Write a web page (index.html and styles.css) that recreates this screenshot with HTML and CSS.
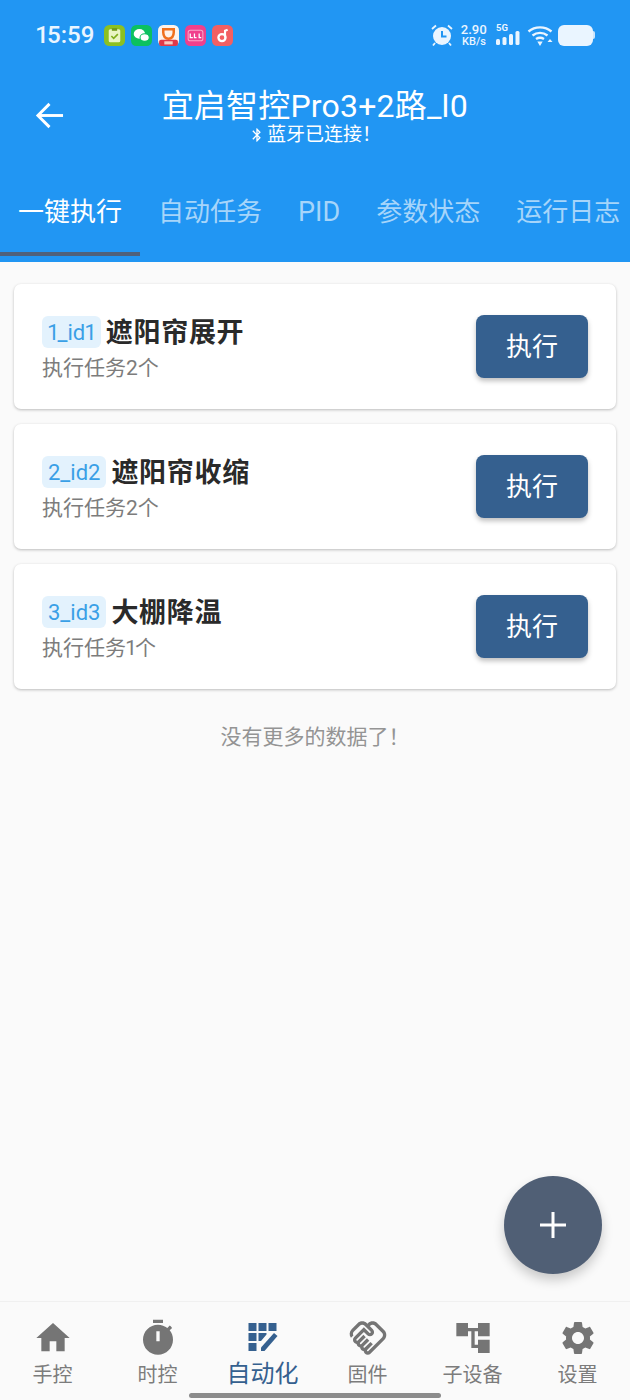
FILE: index.html
```html
<!DOCTYPE html>
<html lang="zh-CN">
<head>
  <meta charset="UTF-8" />
  <meta name="viewport" content="width=device-width, initial-scale=1.0"/>
  <title>宜启智控Pro3+2路_l0</title>
  <link rel="stylesheet" href="styles.css">
</head>
<body>

<header class="top">
  <div class="status-bar">
    <span class="time">15:59</span>
    <div class="notif-icons">
      <svg class="app-icon" viewBox="0 0 20 20"><rect width="20" height="20" rx="5" fill="#8cc021"/><rect x="4.500" y="4" width="11" height="12.500" rx="1.500" fill="#e9f5c4"/><rect x="7.500" y="3" width="5" height="2.500" fill="#6f9a18"/><path d="M7 10.500l2.200 2.200 4-4" fill="none" stroke="#7fae1c" stroke-width="1.500"/></svg>
      <svg class="app-icon" viewBox="0 0 20 20"><rect width="20" height="20" rx="5" fill="#0cc160"/><ellipse cx="8" cy="8.500" rx="5.400" ry="4.600" fill="#fff"/><ellipse cx="13" cy="12" rx="4.400" ry="3.600" fill="#fff" stroke="#0cc160"/></svg>
      <svg class="app-icon" viewBox="0 0 20 20"><rect width="20" height="20" rx="5" fill="#fdf3ea"/><path d="M5 4h10v3c0 4-2 6-5 6s-5-2-5-6z" fill="none" stroke="#f0701c" stroke-width="2.400"/><rect x="1" y="14" width="18" height="6" rx="2" fill="#e0384a"/><rect x="6" y="15.500" width="8" height="3" fill="#f7c9c0"/></svg>
      <svg class="app-icon" viewBox="0 0 20 20"><rect width="20" height="20" rx="5" fill="#f0408c"/><rect x="3" y="5" width="14" height="10" rx="2" fill="none" stroke="#f9a6c9"/><path d="M5 8v4h2.500M9 8v4h2M13.500 8v4h2" fill="none" stroke="#fff" stroke-width="1.200"/></svg>
      <svg class="app-icon" viewBox="0 0 20 20"><rect width="20" height="20" rx="5" fill="#f25f62"/><circle cx="9.500" cy="12" r="3.400" fill="none" stroke="#fff" stroke-width="2.200"/><path d="M12.400 12V5.500l2.500-1" fill="none" stroke="#fff" stroke-width="2"/></svg>
    </div>
    <div class="sys-icons">
      <svg class="alarm" viewBox="0 0 24 24"><circle cx="12" cy="13" r="9" fill="#eaf5ff"/><path d="M12 8v5.500h4.500" fill="none" stroke="#2196f3" stroke-width="2"/><path d="M2 6l4-3.500M22 6l-4-3.500M5 20l-2 2.500M19 20l2 2.500" stroke="#eaf5ff" stroke-width="1.800"/></svg>
      <div class="speed"><span>2.90</span><span class="unit">KB/s</span></div>
      <div class="signal">
        <span class="five-g">5G</span>
        <svg class="bars" viewBox="0 0 24 14"><rect x="0" y="8" width="4" height="6" rx="1.500"/><rect x="6.500" y="6" width="4" height="8" rx="1.500"/><rect x="13" y="3" width="4" height="11" rx="1.500"/><rect x="19.500" y="0" width="4" height="14" rx="1.500"/></svg>
      </div>
      <svg class="wifi" viewBox="0 0 26 22" fill="none" stroke="#eaf5ff" stroke-width="2.400"><path d="M1.500 7.500c6.500-5.500 16.500-5.500 23 0"/><path d="M5.500 11.500c4.500-3.500 10.500-3.500 15 0"/><path d="M9 15c2.500-1.600 5.500-1.600 8 0"/><path d="M10.300 17.500h5.400L13 22z" fill="#eaf5ff" stroke="none"/><path d="M20.500 18h5l-2.500-3z" fill="#eaf5ff" stroke="none"/></svg>
      <div class="battery"><span class="battery-body"></span><span class="battery-tip"></span></div>
    </div>
  </div>

  <div class="app-bar">
    <svg class="back" viewBox="0 0 30 30" fill="none" stroke="#fff" stroke-width="3"><path d="M29 15H3"/><path d="M15 3L3 15l12 12"/></svg>
    <div class="titles">
      <h1>宜启智控Pro3+2路_l0</h1>
      <p class="conn">
        <svg class="bt" viewBox="0 0 24 24"><path fill="#fff" d="M17.710 7.710 12 2h-1v7.590L6.410 5 5 6.410 10.590 12 5 17.590 6.410 19 11 14.410V22h1l5.710-5.710-4.300-4.290 4.300-4.290zM13 5.830l1.880 1.880L13 9.590V5.830zm1.880 10.460L13 18.170v-3.760l1.880 1.880z"/></svg>
        蓝牙已连接！
      </p>
    </div>
  </div>

  <nav class="tabs">
    <button class="tab active">一键执行</button>
    <button class="tab">自动任务</button>
    <button class="tab tab-latin">PID</button>
    <button class="tab">参数状态</button>
    <button class="tab">运行日志</button>
  </nav>
</header>

<main class="list">
  <div class="card">
    <div class="card-info">
      <div class="card-title"><span class="tag">1_id1</span><span class="name">遮阳帘展开</span></div>
      <div class="card-sub">执行任务2个</div>
    </div>
    <button class="run">执行</button>
  </div>
  <div class="card">
    <div class="card-info">
      <div class="card-title"><span class="tag">2_id2</span><span class="name">遮阳帘收缩</span></div>
      <div class="card-sub">执行任务2个</div>
    </div>
    <button class="run">执行</button>
  </div>
  <div class="card">
    <div class="card-info">
      <div class="card-title"><span class="tag">3_id3</span><span class="name">大棚降温</span></div>
      <div class="card-sub">执行任务1个</div>
    </div>
    <button class="run">执行</button>
  </div>
  <p class="no-more">没有更多的数据了！</p>
</main>

<button class="fab">
  <svg viewBox="0 0 26 26"><path d="M13 0v26M0 13h26" stroke="#fff" stroke-width="3"/></svg>
</button>

<footer class="bottom-nav">
  <div class="nav-item">
    <svg viewBox="0 0 24 24"><path d="M10 20v-6h4v6h5v-8h3L12 3 2 12h3v8z"/></svg>
    <span>手控</span>
  </div>
  <div class="nav-item">
    <svg viewBox="0 0 24 24"><path d="M9 1h6v2H9zm10.030 6.390 1.420-1.420c-.43-.51-.9-.99-1.410-1.410l-1.420 1.420C16.070 4.740 14.120 4 12 4c-4.970 0-9 4.030-9 9s4.020 9 9 9 9-4.030 9-9c0-2.120-.74-4.070-1.970-5.610zM13 14h-2V8h2v6z"/></svg>
    <span>时控</span>
  </div>
  <div class="nav-item active">
    <svg viewBox="0 0 40 40"><path d="M5.500 5h8v8h-8zM15.500 5h8v8h-8zM25.500 5h8v8h-8zM5.500 15h8v8h-8zM15.500 15h8v1.500l-5.500 6.500h-2.500zM5.500 25h8v8h-8z"/><path d="M18 33v-3.500L31 15l3.500 3L21.500 33z"/></svg>
    <span>自动化</span>
  </div>
  <div class="nav-item">
    <svg viewBox="0 0 24 24"><path d="M12.220 19.850c-.18.18-.5.21-.71 0-.18-.18-.21-.5 0-.71l3.390-3.390-1.410-1.410-3.390 3.390c-.19.2-.51.19-.71 0-.21-.21-.18-.53 0-.71l3.390-3.390-1.410-1.410-3.390 3.390c-.18.18-.5.21-.71 0-.19-.19-.19-.51 0-.71l3.390-3.390-1.420-1.410-3.390 3.390c-.18.18-.5.21-.71 0-.19-.2-.19-.51 0-.71L9.520 8.400l1.870 1.860c.95.95 2.590.94 3.540 0 .98-.98.98-2.560 0-3.540l-1.860-1.860.28-.28c.78-.78 2.050-.78 2.830 0l4.240 4.240c.78.78.78 2.050 0 2.830l-8.200 8.200zm9.610-6.780c1.560-1.560 1.560-4.090 0-5.660l-4.240-4.240c-1.560-1.560-4.090-1.560-5.660 0l-.28.28-.28-.28c-1.560-1.560-4.090-1.560-5.660 0L2.170 6.710c-1.420 1.420-1.550 3.630-.4 5.190l1.450-1.450c-.39-.75-.26-1.700.37-2.330l3.540-3.540c.78-.78 2.050-.78 2.830 0l3.560 3.560c.18.18.21.5 0 .71-.21.21-.53.18-.71 0L9.520 5.570l-5.800 5.790c-.98.97-.98 2.560 0 3.540.39.39.89.63 1.420.7.07.52.3 1.020.7 1.420.4.4.9.63 1.420.7.07.52.3 1.020.7 1.420.4.4.9.63 1.420.7.07.54.31 1.030.7 1.420.47.47 1.100.73 1.770.73.67 0 1.300-.26 1.770-.73l8.210-8.190z"/></svg>
    <span>固件</span>
  </div>
  <div class="nav-item">
    <svg viewBox="0 0 24 24"><path d="M22 11V3h-7v3H9V3H2v8h7V8h2v10h4v3h7v-8h-7v3h-2V8h2v3z"/></svg>
    <span>子设备</span>
  </div>
  <div class="nav-item">
    <svg viewBox="0 0 24 24"><path d="M19.140 12.940c.04-.3.06-.61.06-.94 0-.32-.02-.64-.07-.94l2.030-1.580c.18-.14.23-.41.12-.61l-1.920-3.320c-.12-.22-.37-.29-.59-.22l-2.390.96c-.5-.38-1.030-.7-1.620-.94l-.36-2.540c-.04-.24-.24-.41-.48-.41h-3.840c-.24 0-.43.17-.47.41l-.36 2.540c-.59.24-1.130.57-1.620.94l-2.390-.96c-.22-.08-.47 0-.59.22L2.740 8.870c-.12.21-.08.47.12.61l2.030 1.580c-.05.3-.09.63-.09.94s.02.64.07.94l-2.030 1.580c-.18.14-.23.41-.12.61l1.920 3.320c.12.22.37.29.59.22l2.390-.96c.5.38 1.030.7 1.620.94l.36 2.540c.05.24.24.41.48.41h3.840c.24 0 .44-.17.47-.41l.36-2.540c.59-.24 1.130-.56 1.620-.94l2.390.96c.22.08.47 0 .59-.22l1.920-3.320c.12-.22.07-.47-.12-.61l-2.010-1.580zM12 15.600c-1.980 0-3.600-1.620-3.600-3.600s1.620-3.600 3.600-3.600 3.600 1.620 3.600 3.600-1.620 3.600-3.600 3.600z"/></svg>
    <span>设置</span>
  </div>
</footer>

<div class="home-bar"></div>

</body>
</html>
```

FILE: styles.css
```css
* {
  box-sizing: border-box;
}
body {
  font-family: Roboto, 'Noto Sans CJK SC', sans-serif;
  font-variant-numeric: proportional-nums;
  margin: 0;
  background: #fafafa;
  height: 1400px;
  display: flex;
  flex-direction: column;
  position: relative;
  overflow: hidden;
}
.top {
  background: #2196f3;
  color: white;
  height: 262px;
  flex: none;
}
.status-bar {
  display: flex;
  align-items: center;
  height: 70px;
  padding: 0 35px 0 36px;
}
.time {
  font-size: 24px;
  font-weight: 500;
  color: #eaf5ff;
  width: 68px;
}
.notif-icons {
  display: flex;
  gap: 6px;
}
.app-icon {
  width: 21px;
  height: 21px;
  display: block;
}
.sys-icons {
  margin-left: auto;
  display: flex;
  align-items: center;
}
.alarm {
  width: 24px;
  height: 24px;
}
.speed {
  display: flex;
  flex-direction: column;
  align-items: center;
  margin-left: 7px;
  font-size: 13px;
  line-height: 13px;
  font-weight: 500;
  color: #eaf5ff;
}
.speed .unit {
  font-size: 11px;
  line-height: 11px;
}
.signal {
  position: relative;
  width: 25px;
  height: 22px;
  margin-left: 9px;
}
.five-g {
  position: absolute;
  left: 0;
  top: -2px;
  font-size: 9.5px;
  font-weight: 700;
  color: #eaf5ff;
}
.bars {
  position: absolute;
  left: 0;
  bottom: 1px;
  width: 24px;
  height: 14px;
  fill: #eaf5ff;
}
.wifi {
  width: 26px;
  height: 22px;
  margin-left: 6px;
}
.battery {
  display: flex;
  align-items: center;
  margin-left: 5px;
}
.battery-body {
  width: 35px;
  height: 21px;
  background: #eaf5ff;
  border-radius: 6px;
}
.battery-tip {
  width: 2px;
  height: 8px;
  background: #cfe6fb;
  border-radius: 0 2px 2px 0;
}
.app-bar {
  position: relative;
  height: 89px;
  padding-top: 2px;
  display: flex;
  align-items: center;
  justify-content: center;
}
.back {
  position: absolute;
  left: 35px;
  top: 31px;
  width: 29px;
  height: 29px;
}
.titles {
  text-align: center;
}
.titles h1 {
  margin: 0;
  font-size: 32px;
  line-height: 38px;
  font-weight: 400;
  letter-spacing: 0.2px;
}
.conn {
  margin: 0;
  font-size: 19px;
  line-height: 20px;
  display: flex;
  align-items: center;
  justify-content: center;
}
.bt {
  width: 16px;
  height: 16px;
  margin-right: 2px;
}
.tabs {
  display: flex;
  white-space: nowrap;
}
.tab {
  font-family: inherit;
  background: none;
  border: none;
  border-bottom: 4px solid transparent;
  color: #a6d5fa;
  font-size: 26px;
  line-height: 36px;
  padding: 35px 18px 22px;
  flex: none;
}
.tab-latin {
  font-size: 27px;
}
.tab.active {
  color: white;
  border-bottom-color: #50617a;
}
.list {
  flex: 1;
  padding: 22px 14px 0;
  display: flex;
  flex-direction: column;
  gap: 15px;
}
.card {
  height: 125px;
  background: white;
  border-radius: 7px;
  box-shadow: 0 1px 3px rgba(0,0,0,0.25);
  display: flex;
  align-items: center;
  justify-content: space-between;
  padding: 0 28px;
}
.card-info {
  padding-top: 2px;
}
.card-title {
  display: flex;
  align-items: center;
}
.tag {
  background: #e3f2fd;
  color: #3a9fe6;
  font-size: 22px;
  line-height: 30px;
  padding: 2px 6px 0;
  border-radius: 6px;
  margin-right: 5px;
}
.name {
  font-size: 27px;
  font-weight: 700;
  color: #2a2a2a;
  letter-spacing: 0.7px;
  margin-top: -2px;
}
.card-sub {
  font-size: 21px;
  line-height: 28px;
  color: #7c7c7c;
  margin-top: 4px;
}
.run {
  font-family: inherit;
  width: 112px;
  height: 63px;
  margin-top: -1px;
  padding: 0 0 4px;
  background: #35608f;
  color: white;
  border: none;
  border-radius: 8px;
  font-size: 26px;
  box-shadow: 0 3px 5px rgba(0,0,0,0.25);
}
.no-more {
  margin: 19px 0 0;
  text-align: center;
  font-size: 21px;
  line-height: 28px;
  color: #949494;
}
.fab {
  position: absolute;
  left: 504px;
  top: 1176px;
  width: 98px;
  height: 98px;
  border-radius: 50%;
  border: none;
  padding: 0;
  background: #505f75;
  box-shadow: 0 6px 12px rgba(0,0,0,0.2);
  display: flex;
  align-items: center;
  justify-content: center;
}
.fab svg {
  width: 26px;
  height: 26px;
}
.bottom-nav {
  flex: none;
  height: 99px;
  border-top: 1px solid #f0f0f0;
  display: flex;
  color: #7c7c7c;
}
.nav-item {
  flex: 1;
  display: flex;
  flex-direction: column;
  align-items: center;
  padding-top: 16px;
  font-size: 20px;
  line-height: 26px;
}
.nav-item svg {
  width: 40px;
  height: 40px;
  fill: #757575;
  margin-bottom: 4px;
}
.nav-item.active {
  color: #35608f;
  font-size: 24px;
  line-height: 24px;
}
.nav-item.active svg {
  fill: #35608f;
}
.home-bar {
  position: absolute;
  left: 189px;
  top: 1393px;
  width: 252px;
  height: 5px;
  border-radius: 3px;
  background: #8c8c8c;
}
```
